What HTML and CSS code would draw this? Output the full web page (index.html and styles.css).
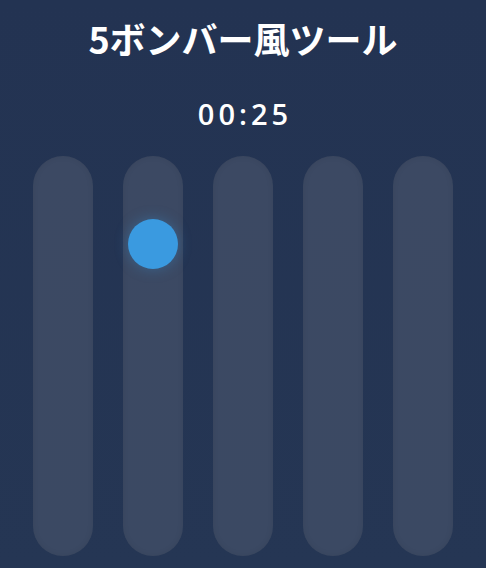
FILE: index.html
```html
<!DOCTYPE html>
<html lang="ja">
<head>
<meta charset="utf-8">
<title>5ボンバー風ツール</title>
<link rel="stylesheet" href="styles.css">
</head>
<body>
<main class="app">
  <h1 class="title">5ボンバー風ツール</h1>
  <div class="timer">00:25</div>
  <div class="lanes">
    <div class="lane"></div>
    <div class="lane"><div class="ball"></div></div>
    <div class="lane"></div>
    <div class="lane"></div>
    <div class="lane"></div>
  </div>
</main>
</body>
</html>
```
FILE: styles.css
```css
html, body {
  margin: 0;
  padding: 0;
  height: 100%;
}
body {
  background: linear-gradient(180deg, #233352 0%, #253654 100%);
  font-family: "Noto Sans CJK JP", "Noto Sans", sans-serif;
  color: #ffffff;
  overflow: hidden;
}
.app {
  display: flex;
  flex-direction: column;
  align-items: center;
}
.title {
  margin: 14px 0 0;
  font-size: 36px;
  font-weight: 700;
  line-height: 48px;
  letter-spacing: 0;
}
.timer {
  margin-top: 34px;
  font-family: "Open Sans", sans-serif;
  font-weight: 600;
  font-size: 29px;
  line-height: 36px;
  letter-spacing: 4px;
  padding-left: 4px;
}
.lanes {
  margin-top: 24px;
  display: flex;
  gap: 30px;
}
.lane {
  position: relative;
  width: 60px;
  height: 400px;
  border-radius: 30px;
  background: linear-gradient(180deg, #3c4963 0%, #3b4963 100%);
  box-shadow: inset 0 0 6px rgba(0,0,0,0.08);
}
.ball {
  position: absolute;
  left: 5px;
  top: 63px;
  width: 50px;
  height: 50px;
  border-radius: 50%;
  background: #3a9ae0;
  box-shadow: 0 0 14px rgba(58,154,224,0.35);
}
```
